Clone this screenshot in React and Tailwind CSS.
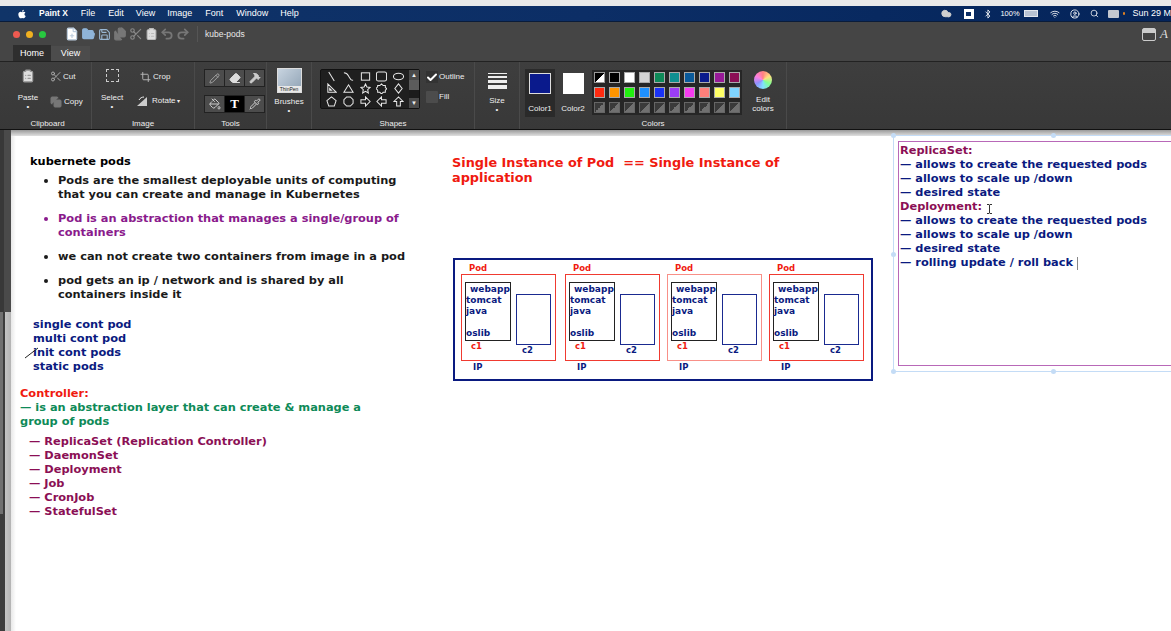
import React from "react";
import { FaApple } from "react-icons/fa";
import { Bluetooth, Wifi, Search, CircleUser, Cloud, Scissors, Crop, Pencil, Eraser, PaintBucket, Pipette, Undo2, Redo2, Save, FolderOpen, FilePlus, Copy, ClipboardList, Check, Files, Hammer } from "lucide-react";

const SWATCH_ONE = ["half", "#000000", "#ffffff", "#d4d4d4", "#0e8a58", "#0e8f90", "#0a5a9a", "#0a1a8c", "#971a98", "#8b0f55"];
const SWATCH_TWO = ["#ff2a10", "#ff9500", "#22f010", "#1e90ff", "#1a33f5", "#9b3cf5", "#f53cf0", "#ff7f7a", "#ffff66", "#7fd4ff"];

const PODS = [
  { left: 6, tone: "border-[#f03a30]" },
  { left: 110, tone: "border-[#f03a30]" },
  { left: 212, tone: "border-[#f89088]" },
  { left: 314, tone: "border-[#f03a30]" },
];

const ShapeIcon = ({ children }) => (
  <svg width="11" height="11" viewBox="0 0 12 12" fill="none" stroke="#e8e8e8" strokeWidth="1.1">{children}</svg>
);

const SHAPES = [
  <path d="M3 1l6 10" />,
  <path d="M1 2c4 0 4 2 6 5s2 3 4 3" />,
  <rect x="1.5" y="2" width="9" height="8" />,
  <rect x="0.5" y="1" width="11" height="10" rx="2" />,
  <ellipse cx="6" cy="6" rx="5.5" ry="3.5" />,
  <path d="M2 1v9h9z M4 6v2h2z" />,
  <path d="M6 2l5 8H1z" />,
  <path d="M6 1l1.5 3.4 3.5.4-2.6 2.4.7 3.6L6 9l-3.1 1.8.7-3.6L1 4.8l3.5-.4z" />,
  <path d="M6 1l1.8 1.8h2.4v2.4L12 6l-1.8 1.8v2.4H7.800L6 12l-1.8-1.800H1.800V7.800L0 6l1.800-1.800V2.800h2.400z" />,
  <path d="M6 1l4 5-4 5-4-5z" />,
  <path d="M6 1l5 4-2 6H3L1 5z" />,
  <path d="M4 1h4l3 3v4l-3 3H4L1 8V4z" />,
  <path d="M1 4h5V1l5 5-5 5V8H1z" />,
  <path d="M11 4H6V1L1 6l5 5V8h5z" />,
  <path d="M4 11V6H1l5-5 5 5H8v5z" />,
];

const Group = ({ width, label, labelClass = "", children }) => (
  <div className="flex flex-col border-r border-[#4a4a4a] shrink-0" style={{ width }}>
    <div className="h-[55px] flex">{children}</div>
    <div className={`h-[12px] text-center text-[8px] leading-[12px] pt-[1px] text-[#eeeeee] ${labelClass}`}>{label}</div>
  </div>
);

const ToolCell = ({ active, children }) => (
  <div className={`w-[19px] h-[16px] flex items-center justify-center ${active ? "bg-black" : "bg-[#4c4c4c]"}`}>{children}</div>
);

const Swatch = ({ color }) => (
  <div className="w-[15px] h-[15px] bg-[#262626] flex items-center justify-center">
    {color === "half" ? (
      <div className="w-[11px] h-[11px] border border-[#999] bg-[linear-gradient(135deg,#000_50%,#fff_50%)]" />
    ) : color === "off" ? (
      <div className="w-[11px] h-[11px] border border-[#666] bg-[linear-gradient(135deg,#3a3a3a_50%,#707070_50%)]" />
    ) : (
      <div className="w-[11px] h-[11px] border border-[#aaa]" style={{ backgroundColor: color }} />
    )}
  </div>
);

const Pod = ({ left, tone }) => (
  <div className="absolute top-0 w-[96px] h-[120px] text-[#0a1a80]" style={{ left }}>
    <span className="absolute left-[8px] top-[3px] text-[8.500px] leading-[11px] text-[#f01a10]">Pod</span>
    <div className={`absolute left-0 top-[14px] w-[95px] h-[87px] border ${tone}`} />
    <div className="absolute left-[4px] top-[22px] w-[46px] h-[59px] border border-[#222] text-[9px] leading-[11px] pt-[1px]">
      <p className="pl-[4px]">webapp</p>
      <p>tomcat</p>
      <p>java</p>
      <p className="mt-[11px]">oslib</p>
    </div>
    <div className="absolute left-[55px] top-[34px] w-[35px] h-[51px] border border-[#1a2a90]" />
    <span className="absolute left-[10px] top-[81px] text-[8.500px] leading-[11px] text-[#f01a10]">c1</span>
    <span className="absolute left-[61px] top-[85px] text-[8.500px] leading-[11px]">c2</span>
    <span className="absolute left-[12px] top-[102px] text-[8.500px] leading-[11px]">IP</span>
  </div>
);

const Handle = ({ className }) => <span className={`absolute w-[5px] h-[5px] rounded-full bg-[#c4dcf6] ${className}`} />;

export default function App() {
  return (
    <div className="w-[1171px] h-[631px] overflow-hidden flex flex-col bg-white font-['Liberation_Sans',sans-serif]">
      <div className="h-[6px] bg-[#e9e9e9]" />

      {/* mac menu bar */}
      <div className="h-[16px] bg-[linear-gradient(90deg,#103468,#0c2e66_50%,#04245a)] flex items-center text-white text-[9px] leading-none border-b border-[#0a1c3a]">
        <FaApple className="ml-[17px] w-[10px] h-[10px]" />
        <span className="ml-[12px] font-bold text-[8.500px]">Paint X</span>
        <span className="ml-[13px]">File</span>
        <span className="ml-[13px]">Edit</span>
        <span className="ml-[12px]">View</span>
        <span className="ml-[12px]">Image</span>
        <span className="ml-[13px]">Font</span>
        <span className="ml-[13px]">Window</span>
        <span className="ml-[12px]">Help</span>
        <div className="ml-auto flex items-center w-[233px] shrink-0">
          <Cloud className="w-[13px] h-[11px] ml-[2px] fill-[#cfcfcf] text-[#cfcfcf]" />
          <span className="ml-[11px] w-[10px] h-[10px] bg-white flex items-center justify-center">
            <span className="w-[5px] h-[4px] bg-[#0c2e66]" />
          </span>
          <Bluetooth className="ml-[9px] w-[10px] h-[10px]" />
          <span className="ml-[8px] text-[7.500px]">100%</span>
          <span className="ml-[4px] w-[15px] h-[7px] bg-[#b8c2d2] border border-white/60" />
          <Wifi className="ml-[11px] w-[12px] h-[10px]" />
          <CircleUser className="ml-[9px] w-[10px] h-[10px]" />
          <Search className="ml-[10px] w-[9px] h-[9px]" />
          <span className="ml-[9px] w-[11px] h-[8px] bg-[#c4c8d0] rounded-[1px]" />
          <span className="ml-[4px] w-[3px] h-[3px] rounded-full bg-[#e08020]" />
          <span className="ml-[7px] text-[9px] whitespace-nowrap">Sun 29 M</span>
        </div>
      </div>

      {/* title row */}
      <div className="h-[24px] bg-[#454545] flex items-center pl-[13px]">
        <span className="w-[7px] h-[7px] rounded-full bg-[#ee5a50]" />
        <span className="ml-[6px] w-[7px] h-[7px] rounded-full bg-[#f0b020]" />
        <span className="ml-[6px] w-[7px] h-[7px] rounded-full bg-[#28c840]" />
        <div className="ml-[19px] flex items-center gap-[2px] text-[#c9d4de]">
          <FilePlus className="w-[14px] h-[14px] fill-white text-[#bcd]" />
          <FolderOpen className="w-[15px] h-[14px] fill-[#8fb4d8] text-[#8fb4d8]" />
          <Save className="w-[13px] h-[13px] text-[#9ab8d4]" />
          <Files className="w-[14px] h-[14px] fill-[#777] text-[#777]" />
          <Scissors className="w-[14px] h-[14px] text-[#888]" />
          <ClipboardList className="w-[13px] h-[14px] fill-[#ddd] text-[#bbb]" />
          <Undo2 className="w-[14px] h-[14px] text-[#777]" strokeWidth={3} />
          <Redo2 className="w-[14px] h-[14px] text-[#777]" strokeWidth={3} />
        </div>
        <div className="ml-[7px] w-px h-[16px] bg-[#555]" />
        <span className="ml-[7px] text-[8.500px] text-[#e8e8e8]">kube-pods</span>
        <div className="ml-auto flex items-center pr-[3px]">
          <span className="w-[14px] h-[13px] rounded-[2px] border border-[#ccc] bg-[linear-gradient(#ccc_35%,#444_35%)]" />
          <span className="ml-[4px] text-[13px] italic text-[#ddd] font-['Liberation_Serif',serif]">A</span>
        </div>
      </div>

      {/* tabs */}
      <div className="h-[16px] bg-[#454545] pl-[13px] flex items-end text-[9px] text-white border-b border-[#222]">
        <span className="w-[38px] h-[16px] bg-[#2e2e2e] text-center leading-[17px]">Home</span>
        <span className="w-[39px] h-[15px] bg-[#4c4c4c] text-center leading-[15px]">View</span>
      </div>

      {/* ribbon */}
      <div className="h-[68px] bg-[linear-gradient(#3e3e3e,#383838)] flex pl-[14px] border-b border-[#111] text-[8px] text-[#eeeeee]">
        <Group width={78} label="Clipboard" labelClass="pr-[10px]">
          <div className="w-[28px] flex flex-col items-center pt-[6px]">
            <ClipboardList className="w-[14px] h-[16px] fill-[#ddd] text-[#999]" />
            <span className="mt-[9px] leading-[10px]">Paste</span>
            <span className="leading-[8px]">•</span>
          </div>
          <div className="pl-[8px] pt-[8px] flex flex-col gap-[13px]">
            <div className="flex items-center gap-[1px]"><Scissors className="w-[12px] h-[13px] text-[#aaa]" />Cut</div>
            <div className="flex items-center gap-[2px]"><Copy className="w-[12px] h-[12px] fill-[#777] text-[#777]" />Copy</div>
          </div>
        </Group>
        <Group width={103} label="Image">
          <div className="w-[40px] flex flex-col items-center pt-[7px]">
            <span className="w-[13px] h-[13px] border border-dashed border-[#ccc]" />
            <span className="mt-[11px] leading-[10px]">Select</span>
            <span className="leading-[8px]">•</span>
          </div>
          <div className="pl-[4px] pt-[9px] flex flex-col gap-[12px]">
            <div className="flex items-center gap-[2px] pl-[4px]"><Crop className="w-[11px] h-[12px] text-[#bbb]" />Crop</div>
            <div className="flex items-center gap-[1px]">
              <svg width="15" height="12" viewBox="0 0 15 12"><path d="M1 11L11 2v9z" fill="#ccc" /><path d="M3 5c1-2 3-3 5-3" stroke="#eee" fill="none" /></svg>
              Rotate <span className="text-[6px]">▾</span>
            </div>
          </div>
        </Group>
        <Group width={72} label="Tools">
          <div className="pl-[9px] pt-[7px] flex flex-col gap-[8px]">
            <div className="flex gap-px bg-[#222] p-px w-fit">
              <ToolCell><Pencil className="w-[11px] h-[11px] text-[#aaa]" /></ToolCell>
              <ToolCell><Eraser className="w-[12px] h-[12px] fill-[#ddd] text-[#ddd]" /></ToolCell>
              <ToolCell><Hammer className="w-[12px] h-[12px] fill-[#ccc] text-[#ccc]" /></ToolCell>
            </div>
            <div className="flex gap-px bg-[#222] p-px w-fit">
              <ToolCell><PaintBucket className="w-[12px] h-[12px] text-[#ccc]" /></ToolCell>
              <ToolCell active><span className="text-[13px] font-bold text-white font-['Liberation_Serif',serif]">T</span></ToolCell>
              <ToolCell><Pipette className="w-[12px] h-[12px] text-[#ccc]" /></ToolCell>
            </div>
          </div>
        </Group>
        <Group width={45} label="">
          <div className="w-full flex flex-col items-center pt-[6px]">
            <div className="w-[25px] h-[25px] border border-[#ddd] bg-[linear-gradient(135deg,#c8d4e0,#8fa2b4)] flex flex-col justify-end items-center">
              <span className="w-full bg-[#e8e8e8] text-[#222] text-[5px] leading-[6px] text-center">ThinPen</span>
            </div>
            <span className="mt-[4px] leading-[10px]">Brushes</span>
            <span className="leading-[8px]">•</span>
          </div>
        </Group>
        <Group width={163} label="Shapes">
          <div className="pl-[8px] pt-[7px] flex items-start">
            <div className="w-[100px] h-[40px] bg-[#1f1f1f] border border-[#111] flex rounded-[2px]">
              <div className="w-[89px] grid grid-cols-5 items-center justify-items-center px-[2px]">
                {SHAPES.map((shape, i) => <ShapeIcon key={i}>{shape}</ShapeIcon>)}
              </div>
              <div className="w-[10px] flex flex-col bg-[#4a4a4a] text-[6px] text-center leading-[10px]">
                <span className="h-[10px]">▲</span>
                <span className="h-[11px] bg-[#5c5c5c]" />
                <span className="h-[8px] bg-[#1c1c1c]" />
                <span className="h-[10px]">▼</span>
              </div>
            </div>
            <div className="pl-[6px] pt-[2px] flex flex-col gap-[8px]">
              <div className="flex items-center gap-[1px]">
                <span className="w-[12px] h-[12px] bg-[#333] flex items-center justify-center"><Check className="w-[13px] h-[13px] text-white" strokeWidth={4} /></span>Outline
              </div>
              <div className="flex items-center gap-[1px]">
                <span className="w-[12px] h-[12px] bg-[#4c4c4c] rounded-[1px]" />Fill
              </div>
            </div>
          </div>
        </Group>
        <Group width={45} label="">
          <div className="w-full flex flex-col items-center pt-[11px]">
            <div className="w-[19px] flex flex-col gap-[2px]">
              <span className="h-px bg-[#eee]" />
              <span className="h-[2px] bg-[#eee]" />
              <span className="h-[3px] bg-[#eee]" />
              <span className="h-[4px] bg-[#eee]" />
            </div>
            <span className="mt-[7px] leading-[10px]">Size</span>
            <span className="leading-[8px]">•</span>
          </div>
        </Group>
        <Group width={267} label="Colors">
          <div className="pl-[5px] pt-[7px] w-[34px] shrink-0">
            <div className="w-[30px] h-[48px] bg-[#2a2a2a] flex flex-col items-center pt-[4px]">
              <span className="w-[22px] h-[21px] bg-[#0a1a8c] border border-[#ddd]" />
              <span className="mt-[10px] leading-[10px]">Color1</span>
            </div>
          </div>
          <div className="w-[34px] shrink-0 pt-[11px] pl-[4px] flex flex-col items-center">
            <span className="w-[21px] h-[21px] bg-white" />
            <span className="mt-[10px] leading-[10px]">Color2</span>
          </div>
          <div className="pl-[4px] pt-[8px] flex flex-col">
            <div className="flex">{SWATCH_ONE.map((c, i) => <Swatch key={i} color={c} />)}</div>
            <div className="flex">{SWATCH_TWO.map((c, i) => <Swatch key={i} color={c} />)}</div>
            <div className="flex">{SWATCH_TWO.map((c, i) => <Swatch key={i} color="off" />)}</div>
          </div>
          <div className="pl-[6px] pt-[9px] flex flex-col items-center w-[36px]">
            <span className="w-[18px] h-[18px] rounded-full bg-[conic-gradient(#ff8080,#ffe080,#80ff90,#80e0ff,#9090ff,#ff80e0,#ff8080)]" />
            <span className="mt-[6px] leading-[9px] text-center">Edit colors</span>
          </div>
        </Group>
      </div>

      {/* canvas */}
      <div className="relative flex-1 flex font-['DejaVu_Sans',sans-serif] font-bold text-[11.370px] leading-[14px]">
        {/* window edge behind the sheet: darker up top, lighter lower down */}
        <div className="w-[11px] shrink-0 flex flex-col">
          <div className="h-[182px] bg-[linear-gradient(90deg,#383838_4px,#4a4a4a_4px)]" />
          <div className="h-[202px] bg-[linear-gradient(90deg,#707070_3px,#3c3c3c_3px,#3c3c3c_5px,#c4c4c4_5px,#b4b4b4_11px)]" />
          <div className="flex-1 bg-[linear-gradient(90deg,#3c3c3c_5px,#c4c4c4_5px,#b4b4b4_11px)]" />
        </div>
        <div className="flex-1 bg-[linear-gradient(90deg,#e8e8e8,#ffffff_5px)]">
          <div className="h-[6px] bg-[linear-gradient(#9a9a9a,#e0e0e0)]" />
        </div>

        <div className="absolute left-[30px] top-[24px] text-black">kubernete pods</div>

        <ul className="absolute left-[43px] top-[43px] w-[370px] list-disc pl-[15px] text-[#1a1a1a] flex flex-col gap-[10px]">
          <li>Pods are the smallest deployable units of computing that you can create and manage in Kubernetes</li>
          <li className="text-[#8a1a8c]">Pod is an abstraction that manages a single/group of containers</li>
          <li>we can not create two containers from image in a pod</li>
          <li>pod gets an ip / network and is shared by all containers inside it</li>
        </ul>

        <div className="absolute left-[33px] top-[187px] text-[#0a1a80]">
          <p>single cont pod</p>
          <p>multi cont pod</p>
          <p>init cont pods</p>
          <p>static pods</p>
        </div>
        <svg className="absolute left-[24px] top-[216px]" width="16" height="14" viewBox="0 0 16 14"><path d="M1 12L14 2" stroke="#222" /></svg>

        <div className="absolute left-[20px] top-[256px] w-[360px]">
          <p className="text-[#f01a10]">Controller:</p>
          <p className="text-[#0e8a58]">— is an abstraction layer that can create &amp; manage a group of pods</p>
        </div>

        <div className="absolute left-[29px] top-[304px] text-[#8b0f55]">
          <p>— ReplicaSet (Replication Controller)</p>
          <p>— DaemonSet</p>
          <p>— Deployment</p>
          <p>— Job</p>
          <p>— CronJob</p>
          <p>— StatefulSet</p>
        </div>

        <div className="absolute left-[452px] top-[25px] w-[345px] text-[#f01a10] text-[12.850px] leading-[15px]">
          Single Instance of Pod&nbsp; == Single Instance of application
        </div>

        <div className="absolute left-[453px] top-[128px] w-[420px] h-[123px] border-2 border-[#0a1a80]">
          {PODS.map((pod, i) => <Pod key={i} {...pod} />)}
        </div>

        <div className="absolute left-[893px] top-[5px] w-[300px] h-[237px] border border-[#c4dcf6]">
          <Handle className="left-[-3px] top-[-3px]" />
          <Handle className="left-[157px] top-[-3px]" />
          <Handle className="left-[-3px] top-[116px]" />
          <Handle className="left-[-3px] top-[233px]" />
          <Handle className="left-[157px] top-[233px]" />
          <div className="absolute left-[4px] top-[5px] w-[290px] h-[225px] border border-[#b868b8] pl-[1px] pt-[1px] text-[#0a1a80]">
            <p className="text-[#8b0f55]">ReplicaSet:</p>
            <p>— allows to create the requested pods</p>
            <p>— allows to scale up /down</p>
            <p>— desired state</p>
            <p className="text-[#8b0f55]">Deployment:</p>
            <p>— allows to create the requested pods</p>
            <p>— allows to scale up /down</p>
            <p>— desired state</p>
            <p>— rolling update / roll back <span className="inline-block w-px h-[13px] bg-[#888] align-middle" /></p>
          </div>
        </div>

        <svg className="absolute left-[986px] top-[74px]" width="7" height="10" viewBox="0 0 7 10" fill="none" stroke="#333"><path d="M1 .5h2l.5.5.5-.5h2M3.500 1v8M1 9.500h2l.5-.5.5.5h2" /></svg>
      </div>
    </div>
  );
}
